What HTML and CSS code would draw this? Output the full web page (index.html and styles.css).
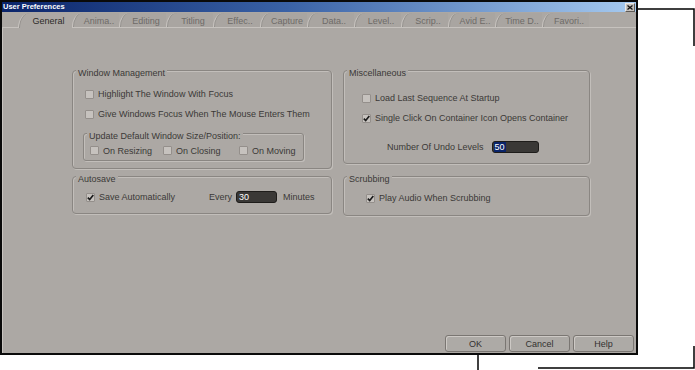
FILE: index.html
```html
<!DOCTYPE html>
<html lang="en">
<head>
    <meta charset="UTF-8">
    <title>User Preferences</title>
    <link rel="stylesheet" href="styles.css">
</head>
<body>

<div class="window">
    <div class="titlebar">
        <span class="titlebar_text">User Preferences</span>
        <span class="titlebar_close">
            <svg width="6" height="5" viewBox="0 0 6 5"><path d="M0.5 0.5 L5.5 4.5 M5.5 0.5 L0.5 4.5" stroke="#111" stroke-width="1.3"/></svg>
        </span>
    </div>

    <div class="tabs">
        <div class="tabs_tab active">General</div>
        <div class="tabs_tab">Anima..</div>
        <div class="tabs_tab">Editing</div>
        <div class="tabs_tab">Titling</div>
        <div class="tabs_tab">Effec..</div>
        <div class="tabs_tab">Capture</div>
        <div class="tabs_tab">Data..</div>
        <div class="tabs_tab">Level..</div>
        <div class="tabs_tab">Scrip..</div>
        <div class="tabs_tab">Avid E..</div>
        <div class="tabs_tab">Time D..</div>
        <div class="tabs_tab">Favori..</div>
    </div>

    <div class="page">
        <div class="groups">

            <div class="group group-window">
                <div class="group_title">Window Management</div>
                <div class="group_body">
                    <div class="row"><span class="check"></span>Highlight The Window With Focus</div>
                    <div class="row"><span class="check"></span>Give Windows Focus When The Mouse Enters Them</div>
                    <div class="subgroup">
                        <div class="group_title">Update Default Window Size/Position:</div>
                        <div class="subgroup_row">
                            <div class="row"><span class="check"></span>On Resizing</div>
                            <div class="row"><span class="check"></span>On Closing</div>
                            <div class="row"><span class="check"></span>On Moving</div>
                        </div>
                    </div>
                </div>
            </div>

            <div class="group group-misc">
                <div class="group_title">Miscellaneous</div>
                <div class="group_body">
                    <div class="row"><span class="check"></span>Load Last Sequence At Startup</div>
                    <div class="row"><span class="check checked"><svg width="7" height="7" viewBox="0 0 7 7"><path d="M0.8 3.6 L2.7 5.6 L6.3 1" fill="none" stroke="#1a1a1a" stroke-width="1.6"/></svg></span>Single Click On Container Icon Opens Container</div>
                    <div class="row row-undo">Number Of Undo Levels<span class="field field-wide"><span class="field_selected">50</span></span></div>
                </div>
            </div>

            <div class="group group-autosave">
                <div class="group_title">Autosave</div>
                <div class="group_body">
                    <div class="row"><span class="check checked"><svg width="7" height="7" viewBox="0 0 7 7"><path d="M0.8 3.6 L2.7 5.6 L6.3 1" fill="none" stroke="#1a1a1a" stroke-width="1.6"/></svg></span>Save Automatically
                        <span class="row_every">Every</span><span class="field">30</span><span class="row_unit">Minutes</span>
                    </div>
                </div>
            </div>

            <div class="group group-scrub">
                <div class="group_title">Scrubbing</div>
                <div class="group_body">
                    <div class="row"><span class="check checked"><svg width="7" height="7" viewBox="0 0 7 7"><path d="M0.8 3.6 L2.7 5.6 L6.3 1" fill="none" stroke="#1a1a1a" stroke-width="1.6"/></svg></span>Play Audio When Scrubbing</div>
                </div>
            </div>

        </div>

        <div class="buttons">
            <button class="buttons_button">OK</button>
            <button class="buttons_button">Cancel</button>
            <button class="buttons_button">Help</button>
        </div>
    </div>
</div>

<svg class="callouts" width="695" height="370" viewBox="0 0 695 370">
    <path d="M638 9 H694 V46" fill="none" stroke="#000" stroke-width="1.5"/>
    <path d="M478 355 V370" fill="none" stroke="#000" stroke-width="1.5"/>
    <path d="M538 368 H694 V346" fill="none" stroke="#000" stroke-width="1.5"/>
</svg>

</body>
</html>
```

FILE: styles.css
```css
body {
    margin: 0;
    background: #fff;
    position: relative;
    width: 695px;
    height: 370px;
    font-family: "Liberation Sans", Arial, sans-serif;
    font-size: 9px;
    color: #3b3937;
}

.window {
    width: 638px;
    height: 355px;
    box-sizing: border-box;
    border: 2px solid #0a0a0a;
    background: #aca8a4;
    display: flex;
    flex-direction: column;
}

.titlebar {
    height: 10px;
    flex: none;
    display: flex;
    align-items: center;
    justify-content: space-between;
    padding-left: 1px;
    background: linear-gradient(to right, #0a246a, #3a62a6 45%, #a6caf0);
}

.titlebar_text {
    color: #fff;
    font-weight: bold;
    font-size: 7.5px;
    line-height: 10px;
}

.titlebar_close {
    width: 10px;
    height: 9px;
    box-sizing: border-box;
    margin-right: 1px;
    margin-top: 1px;
    background: #c4c0bc;
    border: 1px solid;
    border-color: #ece9e6 #5e5a56 #5e5a56 #ece9e6;
    display: flex;
    align-items: center;
    justify-content: center;
}

.tabs {
    height: 16px;
    flex: none;
    display: flex;
    padding-left: 16px;
    box-sizing: border-box;
    border-bottom: 1px solid #c6c2be;
}

.tabs_tab {
    width: 47px;
    flex: none;
    box-sizing: border-box;
    margin-top: 1px;
    padding: 3px 0 0 6px;
    text-align: center;
    color: #6e6b68;
    line-height: 10px;
    background: #a9a5a1;
    border-left: 1px solid #c8c4c0;
    border-top-left-radius: 11px 15px;
    box-shadow: inset 1px 0 0 #93908c;
}

.tabs_tab.active {
    width: 54px;
    color: #2c2a28;
    background: #aca8a4;
    margin-bottom: -1px;
}

.page {
    flex: 1;
    display: flex;
    flex-direction: column;
    padding: 42px 2px 1px 69px;
    border-left: 1px solid #c8c4c0;
}

.groups {
    display: grid;
    grid-template-columns: 260px 247px;
    grid-template-rows: 99px 40px;
    column-gap: 11px;
    row-gap: 7px;
    align-items: start;
}

.group {
    box-sizing: border-box;
    border: 1px solid #8a8682;
    border-radius: 4px;
    box-shadow: 1px 1px 0 #c2beba, inset 1px 1px 0 #c2beba;
    display: flex;
    flex-direction: column;
}

.group_title {
    align-self: flex-start;
    height: 10px;
    line-height: 10px;
    margin: -3px 0 0 3px;
    padding: 0 2px;
    background: #aca8a4;
    color: #3b3937;
}

.group-window {
    height: 99px;
}

.group-window .group_body {
    padding: 6px 0 0 12px;
}

.group-misc {
    height: 94px;
}

.group-misc .group_body {
    padding: 10px 0 0 18px;
}

.group-autosave {
    height: 38px;
}

.group-autosave .group_body {
    padding: 3px 0 0 13px;
}

.group-scrub {
    height: 40px;
}

.group-scrub .group_body {
    padding: 4px 0 0 22px;
}

.row {
    height: 20px;
    display: flex;
    align-items: center;
    white-space: nowrap;
}

.row-undo {
    margin-top: 9px;
    padding-left: 25px;
}

.row_every {
    margin-left: 34px;
    margin-right: 4px;
}

.row_unit {
    margin-left: 6px;
}

.check {
    width: 9px;
    height: 9px;
    flex: none;
    box-sizing: border-box;
    margin-right: 4px;
    border: 1px solid #948f8b;
    border-radius: 1px;
    background: #c6c2be;
    display: flex;
    align-items: center;
    justify-content: center;
}

.subgroup {
    width: 221px;
    margin: 9px 0 0 -2px;
    box-sizing: border-box;
    border: 1px solid #8a8682;
    border-radius: 3px;
    box-shadow: 1px 1px 0 #c2beba, inset 1px 1px 0 #c2beba;
    display: flex;
    flex-direction: column;
}

.subgroup_row {
    display: grid;
    grid-template-columns: 73px 76px auto;
    padding-left: 6px;
}

.subgroup_row .row {
    height: 19px;
}

.field {
    width: 41px;
    height: 12px;
    box-sizing: border-box;
    background: #3a3836;
    border: 1px solid #1e1c1a;
    border-radius: 3px;
    color: #fff;
    line-height: 10px;
    padding-left: 2px;
}

.field-wide {
    width: 47px;
    margin-left: 8px;
    padding-left: 1px;
}

.field_selected {
    display: inline-block;
    background: #0a246a;
    padding: 0 1px;
}

.buttons {
    margin-top: auto;
    display: flex;
    justify-content: flex-end;
    gap: 3px;
}

.buttons_button {
    width: 61px;
    height: 17px;
    box-sizing: border-box;
    font-family: "Liberation Sans", Arial, sans-serif;
    font-size: 9px;
    color: #333130;
    background: #adaaa6;
    border: 1px solid #7a7672;
    border-radius: 3px;
    box-shadow: inset 1px 1px 0 #cdc9c5;
    padding: 0;
}

.callouts {
    position: absolute;
    left: 0;
    top: 0;
    pointer-events: none;
}
```
